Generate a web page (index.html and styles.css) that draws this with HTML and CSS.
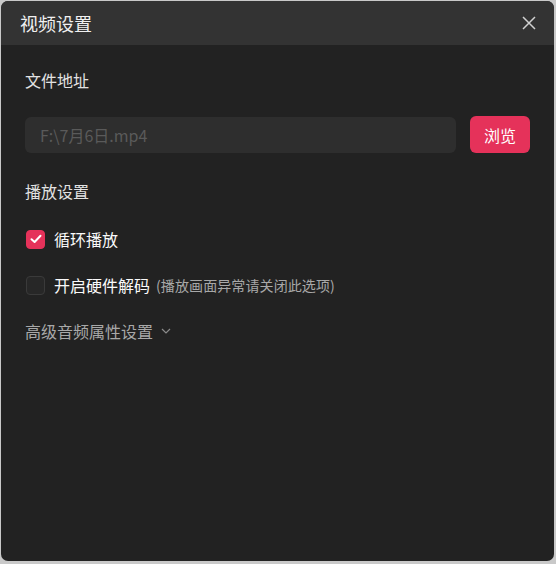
FILE: index.html
```html
<!DOCTYPE html>
<html lang="zh-CN">
<head>
    <meta charset="UTF-8">
    <title>视频设置</title>
    <link rel="stylesheet" href="styles.css">
</head>
<body>

    <div class="dialog">
        <!-- Title bar -->
        <div class="dialog-header">
            <span class="dialog-title">视频设置</span>
            <button class="close-btn" aria-label="关闭">
                <svg width="14" height="14" viewBox="0 0 14 14">
                    <path d="M1 1L13 13M13 1L1 13" stroke="#d0d0d0" stroke-width="1.5" fill="none"/>
                </svg>
            </button>
        </div>

        <div class="dialog-body">
            <div class="section-title">文件地址</div>
            <div class="file-row">
                <input class="file-input" type="text" placeholder="F:\7月6日.mp4">
                <button class="browse-btn">浏览</button>
            </div>

            <div class="section-title">播放设置</div>
            <label class="check-row">
                <span class="checkbox checked">
                    <svg width="12" height="10" viewBox="0 0 12 10">
                        <path d="M1.5 5.2L4.6 8L10.5 1.8" stroke="#fff" stroke-width="2" fill="none" stroke-linecap="round" stroke-linejoin="round"/>
                    </svg>
                </span>
                <span class="check-label">循环播放</span>
            </label>
            <label class="check-row">
                <span class="checkbox"></span>
                <span class="check-label">开启硬件解码</span>
                <span class="check-hint">(播放画面异常请关闭此选项)</span>
            </label>

            <div class="advanced">
                高级音频属性设置
                <svg width="10" height="6" viewBox="0 0 10 6">
                    <path d="M1 1L5 5L9 1" stroke="#8a8a8a" stroke-width="1.2" fill="none"/>
                </svg>
            </div>
        </div>
    </div>

</body>
</html>
```

FILE: styles.css
```css
body {
    margin: 0;
    background-color: #c9c9c9;
    font-family: "Noto Sans CJK SC", "Noto Sans", sans-serif;
    height: 564px;
    padding: 1px 2px 3px 1px;
    box-sizing: border-box;
}

.dialog {
    height: 100%;
    background-color: #222;
    border-radius: 7px;
    overflow: hidden;
    display: flex;
    flex-direction: column;
}

.dialog-header {
    height: 44px;
    background-color: #333;
    display: flex;
    align-items: center;
    justify-content: space-between;
    padding: 0 16px 0 19px;
}

.dialog-title {
    color: #f0f0f0;
    font-size: 18px;
    line-height: 1;
}

.close-btn {
    background: none;
    border: none;
    padding: 0;
    width: 18px;
    height: 18px;
    display: flex;
    align-items: center;
    justify-content: center;
    cursor: pointer;
}

.dialog-body {
    padding: 26px 24px 0 24px;
}

.section-title {
    color: #e2e2e2;
    font-size: 16px;
    line-height: 18px;
}

.file-row {
    display: flex;
    gap: 14px;
    margin: 28px 0 29px;
}

.file-input {
    flex: 1;
    height: 36px;
    box-sizing: border-box;
    background-color: #2e2e2e;
    border: none;
    border-radius: 6px;
    padding: 0 15px;
    font-family: inherit;
    font-size: 16px;
    color: #ddd;
    outline: none;
}

.file-input::placeholder {
    color: #5a5a5a;
}

.browse-btn {
    width: 60px;
    height: 37px;
    margin-top: -1px;
    background-color: #e5325a;
    color: #fff;
    border: none;
    border-radius: 6px;
    font-family: inherit;
    font-size: 16px;
    cursor: pointer;
}

.check-row {
    display: flex;
    align-items: center;
    margin-top: 29px;
    height: 20px;
}

.check-row + .check-row {
    margin-top: 26px;
}

.checkbox {
    width: 19px;
    height: 19px;
    box-sizing: border-box;
    border-radius: 4px;
    border: 1px solid #3a3a3a;
    background-color: #272727;
    display: flex;
    align-items: center;
    justify-content: center;
    margin-left: 1px;
}

.checkbox.checked {
    background-color: #e5325a;
    border-color: #e5325a;
}

.check-label {
    color: #fafafa;
    font-size: 16px;
    margin-left: 9px;
}

.check-hint {
    color: #a8a8a8;
    font-size: 14px;
    margin-left: 6px;
    letter-spacing: 0.1px;
}

.advanced {
    display: flex;
    align-items: center;
    gap: 8px;
    margin-top: 27px;
    color: #a8a8a8;
    font-size: 16px;
    line-height: 18px;
}
```
